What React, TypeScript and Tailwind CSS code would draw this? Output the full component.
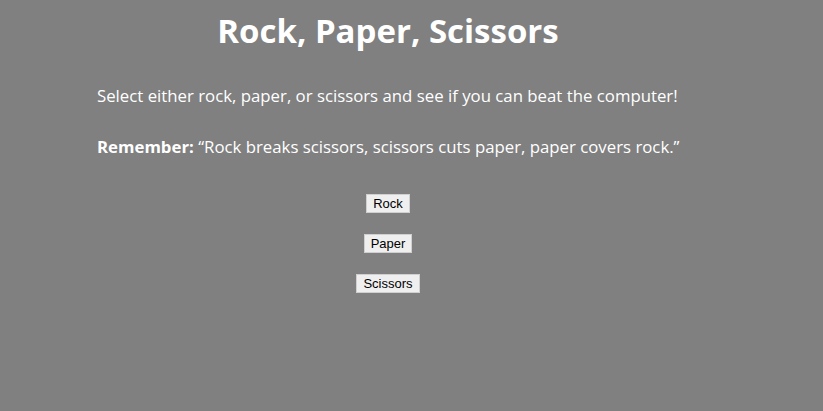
export default function App() {
  return (
    <div className="min-h-[411px] w-full bg-[#808080] text-white" style={{ fontFamily: '"Open Sans", sans-serif' }}>
      <div className="ml-[97px] w-[582px] pt-[11px]">
        <h1 className="text-center text-[33px] font-bold leading-[40px]">Rock, Paper, Scissors</h1>
        <p className="mt-[34px] whitespace-nowrap text-[16.8px] leading-[22px]">
          Select either rock, paper, or scissors and see if you can beat the computer!
        </p>
        <p className="mt-[29px] whitespace-nowrap text-[16.8px] leading-[22px]">
          <span className="font-bold">Remember:</span> “Rock breaks scissors, scissors cuts paper, paper covers rock.”
        </p>
        <div className="mt-[36px] flex flex-col items-center gap-[21px]" style={{ fontFamily: '"Liberation Sans", Arial, sans-serif' }}>
          <button className="h-[19px] border border-[#d0d0d0] bg-[#efefef] px-[6px] text-[13px] leading-none text-black">Rock</button>
          <button className="h-[19px] border border-[#d0d0d0] bg-[#efefef] px-[6px] text-[13px] leading-none text-black">Paper</button>
          <button className="h-[19px] border border-[#d0d0d0] bg-[#efefef] px-[6px] text-[13px] leading-none text-black">Scissors</button>
        </div>
      </div>
    </div>
  )
}
